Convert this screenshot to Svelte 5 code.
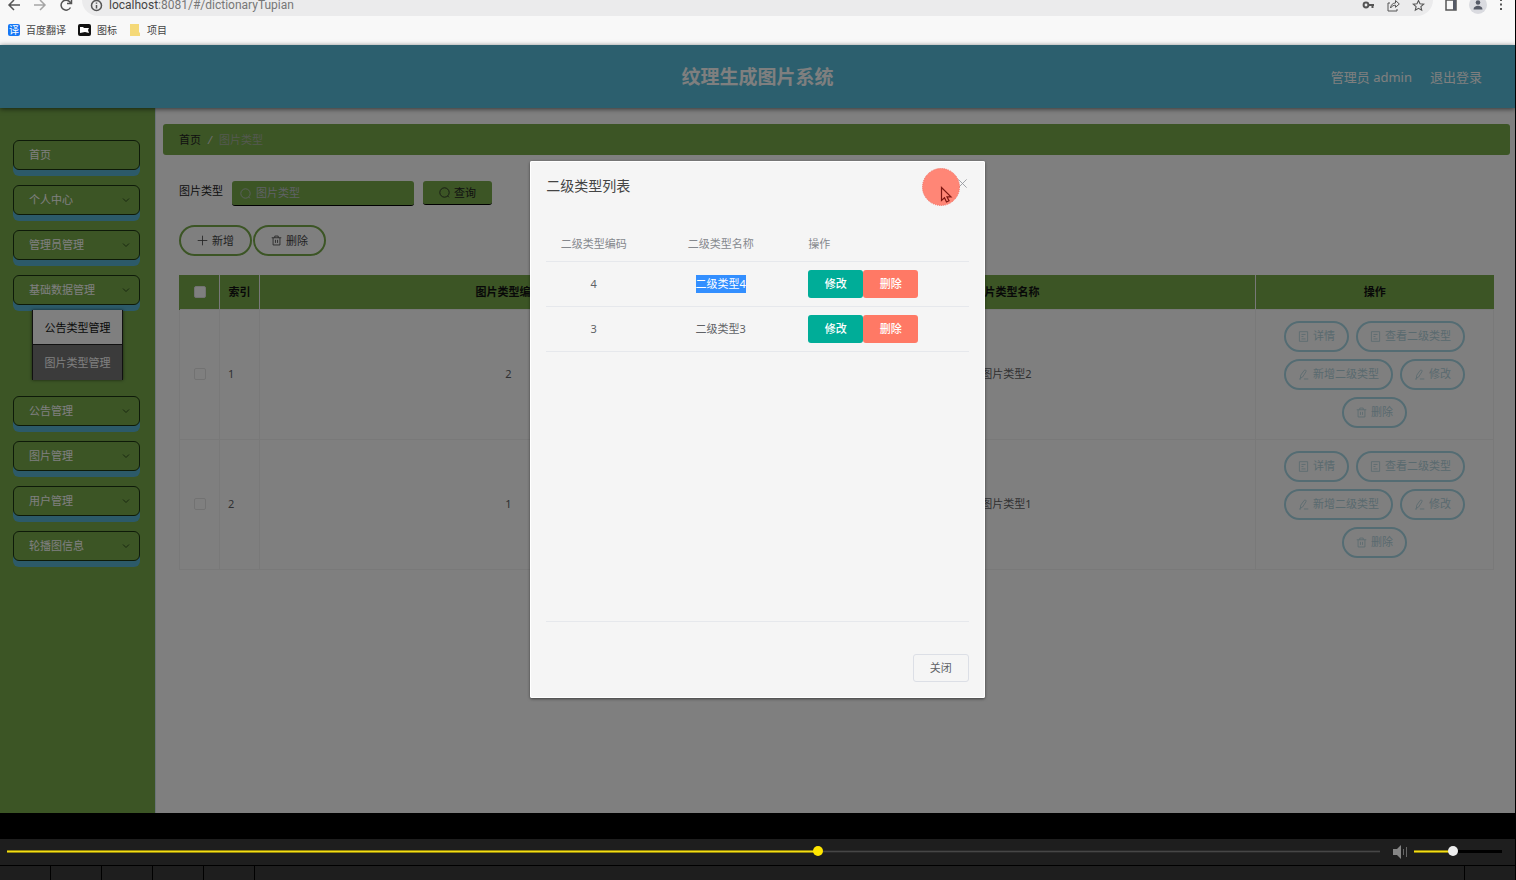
<script lang="ts">
  const menu = [
    { name: "首页", leaf: true },
    { name: "个人中心" },
    { name: "管理员管理" },
    { name: "基础数据管理", children: ["公告类型管理", "图片类型管理"] },
    { name: "公告管理" },
    { name: "图片管理" },
    { name: "用户管理" },
    { name: "轮播图信息" },
  ];

  const rows = [
    { index: 1, code: 2, name: "图片类型2" },
    { index: 2, code: 1, name: "图片类型1" },
  ];

  const actions = [
    { icon: "doc", text: "详情" },
    { icon: "doc", text: "查看二级类型" },
    { icon: "edit", text: "新增二级类型" },
    { icon: "edit", text: "修改" },
    { icon: "trash", text: "删除" },
  ];

  const subTypes = [
    { code: 4, name: "二级类型4" },
    { code: 3, name: "二级类型3" },
  ];

  let picked = $state(4);
  let visible = $state(true);
  let keyword = $state("");
  let progress = $state(591);
  let volume = $state(44);
</script>

{#snippet icon(name: string)}
  <svg class="icon" viewBox="0 0 16 16" aria-hidden="true">
    {#if name === "doc"}
      <path d="M2 1h12v14H2zM5 5h6M5 8h3M5 11.500h6" />
    {:else if name === "edit"}
      <path d="M4 9 9 2q1-1 2.200-.3t.3 2.300L6.800 11.500 3.500 13.500zM1.500 14.500h3M8.500 14.500h6.500" />
    {:else if name === "trash"}
      <path d="M1 4h14M5.500 4V1.500h5V4M3 4v10.500h10V4M6.500 7v4.500M9.500 7v4.500" />
    {:else if name === "plus"}
      <path d="M8 1v14M1 8h14" />
    {:else if name === "search"}
      <circle cx="8" cy="8" r="6.800" />
      <path d="M12.500 13l2 2" />
    {:else if name === "down"}
      <path d="M2 5l6 6 6-6" />
    {:else if name === "close"}
      <path d="M2 2l12 12M14 2 2 14" />
    {/if}
  </svg>
{/snippet}

<div class="screen">
  <header class="chrome">
    <div class="nav-row">
      <button class="tool" aria-label="后退">
        <svg width="14" height="14" viewBox="0 0 14 14"><path d="M13 7H2M7 2 2 7l5 5" /></svg>
      </button>
      <button class="tool faded" aria-label="前进">
        <svg width="14" height="14" viewBox="0 0 14 14"><path d="M1 7h11M7 2l5 5-5 5" /></svg>
      </button>
      <button class="tool" aria-label="刷新">
        <svg width="14" height="14" viewBox="0 0 14 14"><path d="M11.500 9.500A5 5 0 1 1 11 4l1.500 1.500M12.500 1v4.500H8" /></svg>
      </button>
      <div class="omnibox">
        <svg width="13" height="13" viewBox="0 0 13 13"><circle cx="6.500" cy="6.500" r="5" /><path d="M6.500 6v3.500M6.500 3.500v1.200" /></svg>
        <span class="url">localhost<span>:8081/#/dictionaryTupian</span></span>
        <svg width="13" height="13" viewBox="0 0 13 13"><circle cx="4" cy="6" r="2.400" stroke-width="2" /><path d="M6.500 6H12M10.500 6v3" stroke-width="2" /></svg>
        <svg width="13" height="13" viewBox="0 0 13 13"><path d="M3 4H1v8h9v-2M3.500 9c.5-3.500 2.500-5 5-5V1.500L12.300 5 8.500 8.300V6.200c-2 0-3.500.8-5 2.800z" stroke-width="1" /></svg>
        <svg width="13" height="13" viewBox="0 0 13 13"><path d="m6.500 1.500 1.500 3.300 3.700.4-2.800 2.400.8 3.600-3.200-1.900-3.200 1.900.8-3.600L1.300 5.200 5 4.800z" stroke-width="1.100" /></svg>
      </div>
      <button class="tool" aria-label="侧边栏">
        <svg width="12" height="12" viewBox="0 0 12 12"><path d="M1 1h10v10H1z" /><path class="solid" d="M8 1h3v10H8z" /></svg>
      </button>
      <button class="tool avatar" aria-label="用户">
        <svg width="12" height="12" viewBox="0 0 12 12"><circle class="solid" cx="6" cy="3.500" r="2.300" /><path class="solid" d="M1.500 10.500c0-5 9-5 9 0z" /></svg>
      </button>
      <button class="tool" aria-label="更多">
        <svg width="4" height="12" viewBox="0 0 4 12"><path d="M1 1h2M1 5.500h2M1 10h2" stroke-width="2" /></svg>
      </button>
    </div>
    <nav class="bookmarks">
      <a href="#fanyi"><span class="mark blue">译</span>百度翻译</a>
      <a href="#icons">
        <svg width="13" height="12" viewBox="0 0 13 12"><rect width="13" height="12" rx="2" fill="#111" /><path d="M2 3h3l1 1h5l-1 2 1 3-4-1-5 1z" fill="#fff" /></svg>图标
      </a>
      <a href="#items">
        <svg width="12" height="12" viewBox="0 0 12 12"><path d="M1 0h9v8l1 1v3H1z" fill="#f5d978" /></svg>项目
      </a>
    </nav>
  </header>

  <div class="page">
    <div class="top">
      <span></span>
      <h1>纹理生成图片系统</h1>
      <div class="user">
        <span>管理员 admin</span>
        <a href="#logout">退出登录</a>
      </div>
    </div>

    <div class="body">
      <aside>
        {#each menu as item}
          <button class="menu-item">
            {item.name}
            {#if !item.leaf}{@render icon("down")}{/if}
          </button>
          {#if item.children}
            <div class="submenu">
              {#each item.children as child, i}
                <a href="#sub{i}" class:light={i === 0}>{child}</a>
              {/each}
            </div>
          {/if}
        {/each}
      </aside>

      <main>
        <div class="crumb">
          <a href="#home">首页</a><i>/</i><span>图片类型</span>
        </div>
        <div class="content">
          <div class="filter">
            <label for="keyword">图片类型</label>
            <div class="field">
              {@render icon("search")}
              <input id="keyword" type="text" placeholder="图片类型" bind:value={keyword} />
            </div>
            <button class="query">{@render icon("search")}查询</button>
          </div>
          <div class="tools">
            <button class="pill green">{@render icon("plus")}新增</button>
            <button class="pill green">{@render icon("trash")}删除</button>
          </div>

          <table class="list">
            <thead>
              <tr>
                <th class="narrow"><input type="checkbox" aria-label="全选" /></th>
                <th class="narrow">索引</th>
                <th>图片类型编码</th>
                <th>图片类型名称</th>
                <th class="ops">操作</th>
              </tr>
            </thead>
            <tbody>
              {#each rows as row}
                <tr>
                  <td><input type="checkbox" aria-label="选择{row.index}" /></td>
                  <td class="left">{row.index}</td>
                  <td>{row.code}</td>
                  <td>{row.name}</td>
                  <td>
                    <div class="actions">
                      {#each actions as action}
                        <button class="pill">{@render icon(action.icon)}{action.text}</button>
                      {/each}
                    </div>
                  </td>
                </tr>
              {/each}
            </tbody>
          </table>
        </div>
      </main>
    </div>

    {#if visible}
      <div class="overlay">
        <div class="dialog" role="dialog" aria-labelledby="dialog-title">
          <div class="dialog-head">
            <h2 id="dialog-title">二级类型列表</h2>
            <button class="close" aria-label="Close" onclick={() => (visible = false)}>
              {@render icon("close")}
            </button>
          </div>
          <div class="sub-list">
            <table>
              <thead>
                <tr>
                  <th class="code">二级类型编码</th>
                  <th class="name">二级类型名称</th>
                  <th class="left">操作</th>
                </tr>
              </thead>
              <tbody>
                {#each subTypes as sub}
                  <tr>
                    <td>{sub.code}</td>
                    <td onclick={() => (picked = sub.code)}>
                      <span class="sub-name" class:picked={picked === sub.code}>{sub.name}</span>
                    </td>
                    <td class="left">
                      <div class="pair">
                        <button class="modify">修改</button>
                        <button class="remove">删除</button>
                      </div>
                    </td>
                  </tr>
                {/each}
              </tbody>
            </table>
          </div>
          <div class="dialog-foot">
            <button onclick={() => (visible = false)}>关闭</button>
          </div>

          <!-- pointer highlight -->
          <div class="pointer">
            <svg width="38" height="38" viewBox="0 0 38 38">
              <circle cx="19" cy="19" r="18.500" fill="#ff8676" stroke="#f26a5c" stroke-width="1" stroke-dasharray="1 1" />
              <path d="M19.500 19.500v13l3-2.700 2 4.200 2.500-1.200-2-4h4z" fill="#ff8676" stroke="#7d1712" stroke-width="1.200" />
            </svg>
          </div>
        </div>
      </div>
    {/if}
  </div>

  <footer class="player">
    <div class="controls">
      <input
        class="seek"
        type="range"
        min="0"
        max="1000"
        aria-label="进度"
        style="--fill: {progress / 10}%"
        bind:value={progress}
      />
      <svg width="16" height="14" viewBox="0 0 16 14" aria-hidden="true">
        <path d="M0 4h4l4-4v14l-4-4H0z" fill="#858585" />
        <path d="M10.500 4v6M13.500 2v10" stroke="#666" />
      </svg>
      <input
        class="volume"
        type="range"
        min="0"
        max="100"
        aria-label="音量"
        style="--fill: {volume}%"
        bind:value={volume}
      />
    </div>
    <div class="strip">
      {#each Array(5) as _}
        <span></span>
      {/each}
      <span class="rest"></span>
      <span class="end"></span>
    </div>
  </footer>
</div>

<style>
  :global(body) {
    margin: 0;
    background: #000;
  }
  .screen {
    display: flex;
    flex-direction: column;
    min-height: 100vh;
    padding-right: 1px;
    box-sizing: border-box;
    font-family: "Noto Sans", "Noto Sans CJK SC", sans-serif;
    font-size: 11px;
    line-height: 16px;
  }
  button,
  input {
    font: inherit;
    box-sizing: border-box;
    margin: 0;
  }
  button {
    padding: 0;
    border: 0;
    background: none;
    cursor: pointer;
    white-space: nowrap;
  }
  a {
    color: inherit;
    text-decoration: none;
  }
  svg {
    flex: none;
  }
  .icon {
    width: 11px;
    height: 11px;
    fill: none;
    stroke: currentColor;
    stroke-width: 1.2;
  }

  /* browser bar */
  .chrome {
    height: 45px;
    overflow: hidden;
    background: #f8f8f8;
  }
  .nav-row {
    display: flex;
    gap: 12px;
    height: 16px;
    padding: 0 12px 0 7px;
  }
  .nav-row svg {
    fill: none;
    stroke: #555;
    stroke-width: 1.5;
  }
  .nav-row .solid {
    fill: #555a66;
    stroke: none;
  }
  .tool {
    display: flex;
    align-items: center;
    justify-content: center;
    height: 10px;
  }
  .faded {
    opacity: 0.5;
  }
  .avatar {
    width: 18px;
    height: 18px;
    margin-top: -4px;
    border-radius: 50%;
    background: #dadbe0;
  }
  .omnibox {
    display: flex;
    flex: 1;
    align-items: center;
    gap: 12px;
    height: 16px;
    padding: 0 8px 6px;
    margin-left: -3px;
    box-sizing: border-box;
    border-radius: 0 0 16px 16px;
    background: #ebebec;
  }
  .url {
    flex: 1;
    margin-left: -6px;
    color: #444;
    font-family: Roboto, sans-serif;
    font-size: 12px;
    line-height: 10px;
  }
  .url span {
    color: #777;
  }
  .bookmarks {
    display: flex;
    align-items: center;
    gap: 12px;
    height: 28px;
    padding-left: 8px;
    color: #444;
    font-size: 10px;
  }
  .bookmarks a {
    display: flex;
    align-items: center;
    gap: 6px;
  }
  .mark {
    width: 12px;
    height: 12px;
    border-radius: 2px;
    background: #1677f5;
    color: #fff;
    line-height: 12px;
    text-align: center;
  }

  /* page */
  .page {
    display: flex;
    flex: 1;
    flex-direction: column;
    position: relative;
    background: #fff;
  }
  .top {
    display: grid;
    grid-template-columns: 1fr auto 1fr;
    align-items: center;
    height: 63px;
    background: #58bedc;
    box-shadow: 0 1px 5px rgba(0, 0, 0, 0.6);
    color: #fff;
    z-index: 1;
  }
  h1 {
    margin: 0;
    font-size: 19px;
    line-height: 28px;
  }
  .user {
    display: flex;
    justify-content: flex-end;
    gap: 18px;
    padding-right: 33px;
    font-size: 13px;
  }
  .body {
    display: flex;
    flex: 1;
  }
  aside {
    width: 156px;
    padding: 32px 15px 0 13px;
    box-sizing: border-box;
    border-right: 1px solid #d5e8f0;
    background: #78aa4b;
  }
  .menu-item {
    display: flex;
    align-items: center;
    justify-content: space-between;
    width: 100%;
    height: 30px;
    margin-bottom: 15px;
    padding: 0 9px 0 15px;
    border: 1px solid #1d3512;
    border-radius: 6px;
    background: #78aa4b;
    box-shadow: 0 6px 0 #58b4d2;
    color: #fff;
  }
  .menu-item .icon {
    width: 8px;
    height: 8px;
    color: #33511f;
    stroke-width: 2;
  }
  .submenu {
    width: 91px;
    margin: -10px 0 16px 19px;
    border: solid #222;
    border-width: 0 1px;
    box-sizing: border-box;
    box-shadow: 0 0 3px rgba(0, 0, 0, 0.6);
  }
  .submenu a {
    display: block;
    height: 35px;
    background: #777;
    color: #fff;
    line-height: 35px;
    text-align: center;
  }
  .submenu .light {
    border-bottom: 1px solid #222;
    box-sizing: border-box;
    background: #fff;
    color: #111;
  }

  main {
    flex: 1;
    min-width: 0;
    padding: 16px 5px 0 7px;
  }
  .crumb {
    display: flex;
    gap: 7px;
    padding: 0 16px;
    border-radius: 3px;
    background: #78aa4b;
    color: #222;
    line-height: 31px;
  }
  .crumb i {
    color: #ddd;
  }
  .crumb span {
    color: #a8b2a0;
  }
  .content {
    padding: 26px 16px 0;
  }
  .filter {
    display: flex;
    gap: 9px;
    color: #222;
  }
  .filter label {
    line-height: 20px;
  }
  .field {
    display: flex;
    align-items: center;
    gap: 5px;
    width: 182px;
    height: 25px;
    padding: 0 8px;
    border-bottom: 1px solid #000;
    border-radius: 3px;
    box-sizing: border-box;
    background: #78aa4b;
    color: #c0c4cc;
  }
  .field input {
    flex: 1;
    min-width: 0;
    padding: 0;
    border: 0;
    outline: 0;
    background: none;
    color: #fff;
  }
  .field input::placeholder {
    color: #c0c4cc;
  }
  .query {
    display: flex;
    align-items: center;
    justify-content: center;
    gap: 4px;
    width: 69px;
    height: 24px;
    border-bottom: 1px solid #000;
    border-radius: 3px;
    background: #78aa4b;
    color: #222;
  }
  .tools {
    display: flex;
    gap: 1px;
    margin: 19px 0;
  }
  .pill {
    display: flex;
    align-items: center;
    gap: 4px;
    height: 31px;
    padding: 0 12px;
    border: 2px solid #a8d8e6;
    border-radius: 16px;
    color: #b4d4de;
  }
  .green {
    padding: 0 16px;
    border-color: #78aa4b;
    color: #444;
  }

  table {
    width: 100%;
    border-collapse: collapse;
    table-layout: fixed;
  }
  th,
  td {
    padding: 0;
    text-align: center;
  }
  th.left,
  td.left {
    padding-left: 8px;
    text-align: left;
  }
  .list {
    color: #606266;
  }
  .list th {
    height: 34px;
    border-left: 1px solid #f0f0f0;
    background: #78aa4b;
    box-sizing: border-box;
    color: #111;
    font-weight: 600;
  }
  .list th:first-child {
    border-left-color: #78aa4b;
  }
  .list td {
    height: 130px;
    border: 1px solid #f2f2f2;
    box-sizing: border-box;
  }
  .narrow {
    width: 40px;
  }
  .ops {
    width: 238px;
  }
  .list input {
    display: block;
    width: 12px;
    height: 12px;
    margin: 0 auto;
    border: 1px solid #e4e4e4;
    border-radius: 2px;
    appearance: none;
    background: #fff;
  }
  .actions {
    display: flex;
    flex-wrap: wrap;
    justify-content: center;
    gap: 7px;
  }

  /* dialog */
  .overlay {
    display: flex;
    align-items: flex-start;
    justify-content: center;
    position: absolute;
    inset: 0;
    z-index: 2;
    padding-top: 116px;
    background: rgba(0, 0, 0, 0.5);
  }
  .dialog {
    position: relative;
    width: 30%;
    padding: 16px;
    border-radius: 2px;
    background: #f5f5f5;
    box-sizing: border-box;
    box-shadow: 0 1px 3px rgba(0, 0, 0, 0.5), inset 0 0 0 1px #fff;
    color: #606266;
  }
  .dialog-head {
    display: flex;
    align-items: flex-start;
    justify-content: space-between;
    height: 51px;
  }
  h2 {
    margin: 0;
    color: #444;
    font-size: 14px;
    font-weight: 400;
    line-height: 18px;
  }
  .close {
    display: flex;
    width: 12px;
    height: 12px;
    align-items: center;
    color: #909399;
  }
  .sub-list {
    height: 394px;
    border-bottom: 1px solid #e6e8ec;
    box-sizing: border-box;
  }
  .sub-list th {
    height: 33px;
    border-bottom: 1px solid #e6e8ec;
    box-sizing: border-box;
    color: #85888d;
    font-weight: 400;
  }
  .sub-list td {
    height: 45px;
    border-bottom: 1px solid #e6e8ec;
    box-sizing: border-box;
  }
  .code {
    width: 95px;
  }
  .name {
    width: 159px;
  }
  .sub-name {
    display: inline-block;
    line-height: 18px;
  }
  .picked {
    background: #338fff;
    color: #fff;
  }
  .pair {
    display: flex;
  }
  .pair button {
    width: 55px;
    height: 28px;
    border-radius: 3px;
    color: #fff;
    font-weight: 500;
  }
  .modify {
    background: #00ad98;
  }
  .pair .remove {
    background: #ff7965;
  }
  .dialog-foot {
    display: flex;
    justify-content: flex-end;
    padding-top: 32px;
  }
  .dialog-foot button {
    width: 56px;
    height: 28px;
    border: 1px solid #dcdfe6;
    border-radius: 3px;
    color: #606266;
  }
  .pointer {
    position: absolute;
    top: 7px;
    right: 25px;
    height: 38px;
    pointer-events: none;
  }

  /* video player */
  .player {
    padding-top: 26px;
  }
  .controls {
    display: flex;
    align-items: center;
    height: 26px;
    padding: 0 13px 1px 7px;
    box-sizing: border-box;
    background: #1e1e1e;
  }
  .controls input {
    height: 12px;
    appearance: none;
    background: none;
  }
  .seek {
    flex: 1;
    margin-right: 13px;
  }
  .volume {
    width: 88px;
    margin-left: 5px;
  }
  .controls input::-webkit-slider-runnable-track {
    height: 3px;
    background:
      linear-gradient(rgba(0, 0, 0, 0.4) 1px, transparent 1px 2px, rgba(0, 0, 0, 0.4) 2px),
      linear-gradient(to right, #f5de14 var(--fill), #464646 var(--fill));
  }
  .controls .volume::-webkit-slider-runnable-track {
    background:
      linear-gradient(rgba(0, 0, 0, 0.4) 1px, transparent 1px 2px, rgba(0, 0, 0, 0.4) 2px),
      linear-gradient(to right, #f5de14 var(--fill), #000 var(--fill));
  }
  .controls input::-webkit-slider-thumb {
    width: 10px;
    height: 10px;
    margin-top: -4px;
    border-radius: 50%;
    appearance: none;
    background: #ffe600;
  }
  .controls .volume::-webkit-slider-thumb {
    background: #eee;
  }
  .strip {
    display: flex;
    gap: 1px;
    height: 14px;
    padding-top: 1px;
  }
  .strip span {
    width: 50px;
    background: #1e1e1e;
  }
  .strip .rest {
    flex: 1;
  }
</style>
